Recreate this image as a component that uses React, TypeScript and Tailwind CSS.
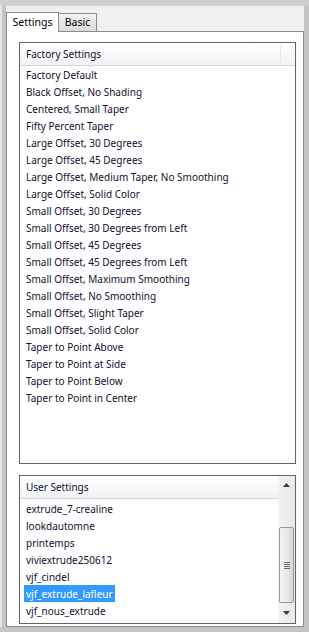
import React from "react";

const factory = [
  "Factory Default",
  "Black Offset, No Shading",
  "Centered, Small Taper",
  "Fifty Percent Taper",
  "Large Offset, 30 Degrees",
  "Large Offset, 45 Degrees",
  "Large Offset, Medium Taper, No Smoothing",
  "Large Offset, Solid Color",
  "Small Offset, 30 Degrees",
  "Small Offset, 30 Degrees from Left",
  "Small Offset, 45 Degrees",
  "Small Offset, 45 Degrees from Left",
  "Small Offset, Maximum Smoothing",
  "Small Offset, No Smoothing",
  "Small Offset, Slight Taper",
  "Small Offset, Solid Color",
  "Taper to Point Above",
  "Taper to Point at Side",
  "Taper to Point Below",
  "Taper to Point in Center",
];

const user = [
  "extrude_7-crealine",
  "lookdautomne",
  "printemps",
  "viviextrude250612",
  "vjf_cindel",
  "vjf_extrude_lafleur",
  "vjf_nous_extrude",
];

function Header({ title, sep }: { title: string; sep: boolean }) {
  return (
    <div className="relative h-[23px] shrink-0 border-b border-[#d5d5d5] bg-gradient-to-b from-[#ffffff] to-[#f1f2f5] flex items-center pl-[6px] text-[#10102e]">
      <span>{title}</span>
      {sep && <div className="absolute left-[260px] top-[2px] bottom-[2px] w-px bg-[#e6e8ec]" />}
    </div>
  );
}

function Item({ text, selected }: { text: string; selected?: boolean }) {
  return (
    <div className="h-[17px] flex items-center pl-[4px]">
      <span
        className={
          selected
            ? "h-[17px] flex items-center px-[2px] bg-[#3399ff] text-white"
            : "h-[17px] flex items-center px-[2px] text-[#10102e]"
        }
      >
        {text}
      </span>
    </div>
  );
}

function Scrollbar() {
  return (
    <div className="w-[17px] h-full flex flex-col bg-gradient-to-r from-[#f3f3f3] to-[#e8e8e8]">
      <div className="h-[17px] flex items-center justify-center">
        <svg width="7" height="4" viewBox="0 0 7 4">
          <path d="M0 4 L3.5 0 L7 4 Z" fill="#3c3c3c" />
        </svg>
      </div>
      <div className="h-[34px]" />
      <div className="mx-[1px] h-[76px] rounded-[2px] border border-[#979797] bg-gradient-to-r from-[#f4f4f4] via-[#e9e9e9] to-[#d6d6d6] flex items-center justify-center">
        <div className="flex flex-col gap-[1px]">
          <div className="w-[6px] h-px bg-[#6a6a6a]" />
          <div className="w-[6px] h-px bg-[#6a6a6a]" />
          <div className="w-[6px] h-px bg-[#6a6a6a]" />
          <div className="w-[6px] h-px bg-[#6a6a6a]" />
        </div>
      </div>
      <div className="flex-1 flex items-center justify-center">
        <svg width="7" height="4" viewBox="0 0 7 4">
          <path d="M0 0 L7 0 L3.5 4 Z" fill="#3c3c3c" />
        </svg>
      </div>
    </div>
  );
}

export default function App() {
  return (
    <div
      className="w-[309px] h-[632px] bg-[#c4c4c4] flex flex-col overflow-hidden text-[10px] leading-none"
      style={{ fontFamily: '"Noto Sans", "DejaVu Sans", sans-serif' }}
    >
      <div className="h-[5px] shrink-0 bg-[#cfcfcf]" />
      <div className="flex flex-1 min-h-0">
        <div className="w-[2px] bg-[#e6e6e6]" />
        <div className="w-[4px] bg-[#c4c4c4]" />
        <div className="w-[298px] flex flex-col bg-[#f0f0f0]">
          <div className="h-px bg-[#d3d7ec]" />
          <div className="h-[25px] relative flex items-end">
            <div className="relative z-10 w-[53px] h-[20px] mb-[-1px] bg-white border border-b-0 border-[#898c95] flex items-center justify-center text-black text-[10.5px]">
              Settings
            </div>
            <div className="w-[38px] h-[18px] bg-gradient-to-b from-[#f2f2f2] to-[#dbdbdb] border border-l-0 border-b-0 border-[#898c95] flex items-center justify-center text-black text-[10.5px]">
              Basic
            </div>
          </div>
          <div className="flex-1 border border-[#898c95] bg-white flex flex-col pt-[10px] pl-[12px]">
            <div className="w-[277px] h-[422px] border border-[#646464] flex flex-col">
              <Header title="Factory Settings" sep />
              {factory.map((t) => (
                <Item key={t} text={t} />
              ))}
            </div>
            <div className="h-[11px]" />
            <div className="w-[277px] h-[149px] border border-[#646464] flex">
              <div className="flex-1 flex flex-col min-w-0">
                <Header title="User Settings" sep={false} />
                <div className="h-px" />
                {user.map((t) => (
                  <Item key={t} text={t} selected={t === "vjf_extrude_lafleur"} />
                ))}
              </div>
              <Scrollbar />
            </div>
          </div>
        </div>
        <div className="w-[5px] bg-[#c4c4c4]" />
      </div>
      <div className="h-[5px] shrink-0 bg-[#c4c4c4]" />
    </div>
  );
}
